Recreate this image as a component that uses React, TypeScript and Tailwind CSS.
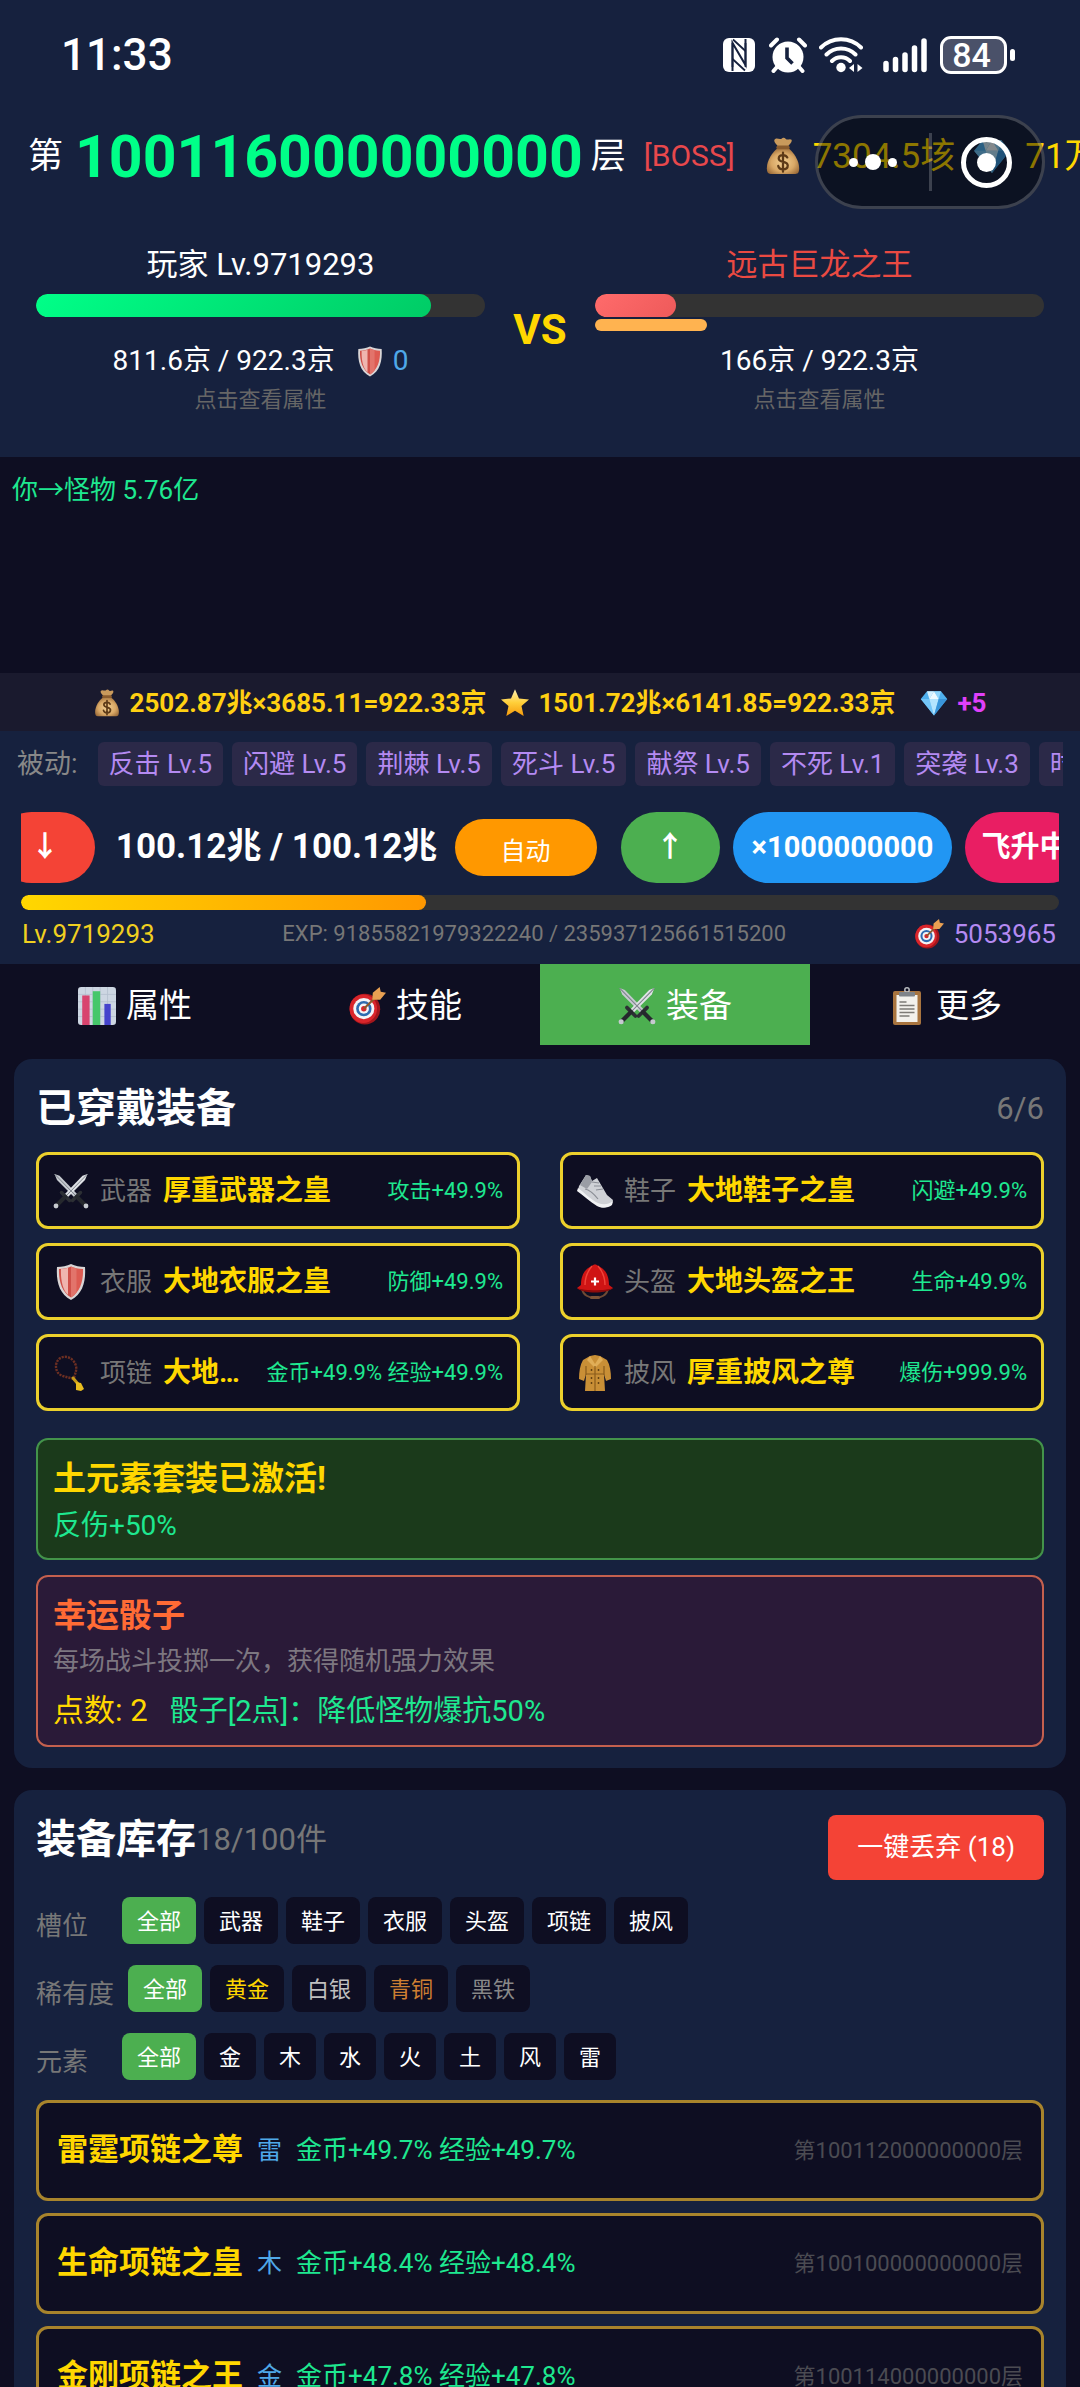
import { useState } from 'react';
import type { ReactNode } from 'react';
import clsx from 'clsx';

type IconProps = { className?: string };

const MoneyBag = ({ className }: IconProps) => (
  <svg viewBox="0 0 36 40" className={className} aria-hidden="true">
    <defs>
      <radialGradient id="bag" cx="0.5" cy="0.55" r="0.6">
        <stop offset="0" stopColor="#f2cf92" />
        <stop offset="0.6" stopColor="#d9a866" />
        <stop offset="1" stopColor="#9a6a38" />
      </radialGradient>
    </defs>
    <path d="M9 3c2-3 5 0 7-1s3-2 5 0 4-1 6 1c1 2-2 5-4 7H13c-2-2-5-5-4-7z" fill="#c99a5c" />
    <path d="M12 12c-5 4-11 12-11 21 0 4 1 6 4 6h26c3 0 4-2 4-6 0-9-6-17-11-21z" fill="url(#bag)" />
    <rect x="11" y="9" width="14" height="4" rx="2" fill="#8a5c2e" />
    <path d="M22.500 21.500c-1-2-2.500-2.500-4.500-2.500-3 0-4.500 1.500-4.500 3.500 0 5 9.500 2.500 9.500 7.500 0 2.500-2 4-5 4-2.500 0-4.500-1-5-3.500M18 16.500v20" fill="none" stroke="#5d3a17" strokeWidth="2.400" strokeLinecap="round" />
  </svg>
);

const Gem = ({ className }: IconProps) => (
  <svg viewBox="0 0 36 36" className={className} aria-hidden="true">
    <path d="M9 3h18l8 10-17 21L1 13z" fill="#4fb0ee" />
    <path d="M9 3l3 10L18 3z" fill="#d5f1ff" />
    <path d="M27 3l-3 10L18 3z" fill="#8fd4fb" />
    <path d="M1 13h11l6 21z" fill="#74c5f7" />
    <path d="M12 13h12l-6 21z" fill="#b4e4fe" />
    <path d="M24 13h11L18 34z" fill="#3a95da" />
    <path d="M18 3l-6 10h12z" fill="#eefaff" />
  </svg>
);

const Star = ({ className }: IconProps) => (
  <svg viewBox="0 0 36 36" className={className} aria-hidden="true">
    <defs>
      <linearGradient id="star" x1="0" y1="0" x2="0" y2="1">
        <stop offset="0" stopColor="#fff0b0" />
        <stop offset="0.5" stopColor="#ffcf3a" />
        <stop offset="1" stopColor="#f59a0c" />
      </linearGradient>
    </defs>
    <path d="M18 1.500l4.800 11 12 1.200-9 8 2.600 11.800L18 27.300 7.600 33.500l2.600-11.800-9-8 12-1.200z" fill="url(#star)" />
  </svg>
);

const Shield = ({ className }: IconProps) => (
  <svg viewBox="0 0 36 36" className={className} aria-hidden="true">
    <path d="M4 3c5 0 10-1 14-3 4 2 9 3 14 3 1 14-2 27-14 33C6 30 3 17 4 3z" fill="#d9d5d6" />
    <path d="M6 5c5 0 9-1 12-2.500v31C9 28 5.500 17 6 5z" fill="#cf5049" />
    <path d="M30 5c-5 0-9-1-12-2.500v31C27 28 30.500 17 30 5z" fill="#dd5b52" />
    <path d="M8 5c2.500 0 5-.5 7-1.200v27C9.500 26 7.500 15 8 5z" fill="#efb5af" />
    <path d="M18 2.500c2 .8 3.500 1.500 5.500 1.900v24c-1.500 2-3.500 4-5.500 5.100z" fill="#e2746b" />
  </svg>
);

const Target = ({ className }: IconProps) => (
  <svg viewBox="0 0 36 36" className={className} aria-hidden="true">
    <ellipse cx="16" cy="21" rx="14.500" ry="14.500" fill="#a3161c" />
    <ellipse cx="14.500" cy="20.500" rx="13" ry="13.500" fill="#d9252b" />
    <circle cx="15" cy="20.500" r="10" fill="#f4f4f6" />
    <circle cx="15" cy="20.500" r="7.300" fill="#2f6bb0" />
    <circle cx="15" cy="20.500" r="4.800" fill="#f4f4f6" />
    <circle cx="15" cy="20.500" r="2.600" fill="#d9252b" />
    <path d="M15 20.500L29 7" stroke="#8c5a2b" strokeWidth="2" />
    <path d="M23 12l.5-6.500L30 0l1 4.500 5 1-5.500 6.500z" fill="#e8a052" />
  </svg>
);

const Swords = ({ className }: IconProps) => (
  <svg viewBox="0 0 36 36" className={className} aria-hidden="true">
    <path d="M1.500 1l5 1.800L26 23l-3 3L4 7z" fill="#c6cad0" />
    <path d="M34.500 1l-5 1.800L10 23l3 3L32 7z" fill="#dfe2e6" />
    <path d="M1.500 1L24.500 24.500M34.500 1L11.500 24.500" stroke="#7d838b" strokeWidth="1" />
    <path d="M19.500 27.500l8-8M16.500 27.500l-8-8" stroke="#2c2f34" strokeWidth="3.500" strokeLinecap="round" />
    <path d="M24 24l8 8M12 24l-8 8" stroke="#25282d" strokeWidth="4" strokeLinecap="round" />
    <circle cx="33" cy="33" r="2.400" fill="#c6cad0" />
    <circle cx="3" cy="33" r="2.400" fill="#c6cad0" />
  </svg>
);

const Chart = ({ className }: IconProps) => (
  <svg viewBox="0 0 36 36" className={className} aria-hidden="true">
    <rect width="36" height="36" rx="3" fill="#cdd6e2" />
    <path d="M0 7h36M0 14h36M0 21h36M0 28h36M7 0v36M14 0v36M21 0v36M28 0v36" stroke="#b4bfce" strokeWidth="0.800" />
    <rect x="4" y="8" width="7" height="28" fill="#d8436e" />
    <rect x="14" y="4" width="7" height="32" fill="#45c76a" />
    <rect x="25" y="16" width="6" height="20" fill="#4543cc" />
  </svg>
);

const Clipboard = ({ className }: IconProps) => (
  <svg viewBox="0 0 36 38" className={className} aria-hidden="true">
    <rect x="4" y="4" width="28" height="34" rx="2" fill="#a8743f" />
    <rect x="7.500" y="8" width="21" height="27" fill="#f3f1ec" />
    <circle cx="18" cy="3" r="2.200" fill="none" stroke="#b9bcc0" strokeWidth="1.500" />
    <rect x="10" y="5" width="16" height="4.500" rx="1" fill="#7f8388" />
    <path d="M10.500 15h7M10.500 18.500h15M10.500 22h15M10.500 25.500h15M10.500 29h10" stroke="#7e7b76" strokeWidth="1.600" />
  </svg>
);

const Shoe = ({ className }: IconProps) => (
  <svg viewBox="0 0 36 36" className={className} aria-hidden="true">
    <path d="M2 13l7-11 4 1 2 5 5-3 10 17 6 5-1 4c-4 4-10 4-14 1L1 17z" fill="#cfd1d6" />
    <path d="M9 2l4 1 2 6-5 7-7-4z" fill="#9a9da5" />
    <path d="M1 15c7 5 13 12 20 15 5 2 10 2 15-2l-1 4c-4 3-10 4-15 1C13 29 6 22 0 18z" fill="#f1f2f4" />
    <path d="M15 9l7 1M17 13l7 0M19 17l7-1M8 16c5 1 9 5 13 10" stroke="#8a8d95" strokeWidth="1.200" fill="none" />
  </svg>
);

const Helmet = ({ className }: IconProps) => (
  <svg viewBox="0 0 36 36" className={className} aria-hidden="true">
    <path d="M5 25c2 12 24 12 26 0" fill="none" stroke="#6f4a34" strokeWidth="1.800" />
    <rect x="13" y="32" width="10" height="3" rx="1.500" fill="#7c5338" />
    <path d="M4 21C4 10 9 4 15 2c1-2 5-2 6 0 6 2 11 8 11 19l4 3c-6 5-30 5-36 0z" fill="#cf1414" />
    <path d="M15 2c-5 6-7 12-7 19M21 2c5 6 7 12 7 19" stroke="#f0443a" strokeWidth="1.400" fill="none" />
    <path d="M0 24c8 3 28 3 36 0-6 6-30 6-36 0z" fill="#8e0c0c" />
    <path d="M18 13.500v8M14 17.500h8" stroke="#fff" strokeWidth="2.200" />
  </svg>
);

const Beads = ({ className }: IconProps) => (
  <svg viewBox="0 0 36 36" className={className} aria-hidden="true">
    <path d="M21 23c1-5 3-7 2-12C21 3 12-1 6 4c-5 5-3 12 0 15 4 3 9 3 15 5" fill="none" stroke="#6d2f22" strokeWidth="2.400" strokeDasharray="2.200 1" />
    <path d="M20 23l5 6" stroke="#c79a1a" strokeWidth="3" strokeLinecap="round" />
    <path d="M23 27l5 1 3 6-3 2-5-1z" fill="#e9bd1f" />
  </svg>
);

const Coat = ({ className }: IconProps) => (
  <svg viewBox="0 0 36 36" className={className} aria-hidden="true">
    <path d="M13 1l5-1 5 1 7 4c3 5 4 12 4 19l-5 2-2-7 1 17H8l1-17-2 7-5-2C2 17 3 10 6 5z" fill="#c98f36" />
    <path d="M13 1l5 8 5-8 3 4-8 8-8-8z" fill="#e0ae58" />
    <path d="M18 11v25M9 19h18M9 11v9M27 11v9" stroke="#8a5c1c" strokeWidth="1.200" />
    <path d="M14.500 15v.1M21.500 15v.1M14.500 23v.1M21.500 23v.1M14.500 28v.1M21.500 28v.1" stroke="#5d3c10" strokeWidth="1.800" strokeLinecap="round" />
  </svg>
);

function StatusBar() {
  return (
    <div className="flex h-[110px] items-center justify-between pl-[61px] pr-[65px]">
      <span className="text-[44px] font-medium leading-none text-white">11:33</span>
      <div className="flex items-center">
        <svg viewBox="0 0 32 34" className="h-[34px] w-8" aria-hidden="true">
          <rect width="32" height="34" rx="6" fill="#fff" />
          <path d="M9.500 33V5l13 22V1" fill="none" stroke="#16213e" strokeWidth="2" />
          <path d="M9.500 5v24M22.500 29V5" fill="none" stroke="#16213e" strokeWidth="1.800" />
          <path d="M10 1.500L22.500 13M9.500 21L22 32.500" fill="none" stroke="#16213e" strokeWidth="1.800" />
        </svg>
        <svg viewBox="0 0 38 36" className="ml-3.5 h-9 w-[38px]" aria-hidden="true">
          <circle cx="19" cy="20" r="15.500" fill="#fff" />
          <path d="M2 8.500l6-6M36 8.500l-6-6M8 30l-3.500 4M30 30l3.500 4" stroke="#fff" strokeWidth="4" strokeLinecap="round" />
          <path d="M18 10.500V21l5.500 5.500" fill="none" stroke="#16213e" strokeWidth="3.600" />
        </svg>
        <svg viewBox="0 0 44 36" className="ml-3 h-9 w-11" aria-hidden="true">
          <path d="M2 10.500c11-11 29-11 40 0M7.500 17.500c8-8 21-8 29 0M13 24c5-5 13-5 18 0" fill="none" stroke="#fff" strokeWidth="4" strokeLinecap="round" />
          <circle cx="22" cy="30.500" r="4.700" fill="#fff" />
          <path d="M30 31l5-4v8zM43.500 31l-5-4v8z" fill="#fff" />
        </svg>
        <svg viewBox="0 0 44 36" className="ml-5 h-9 w-11" aria-hidden="true">
          <path d="M3 26.500v6M12.500 22.500v10M22 18v14.500M31.500 11v21.500M41 4v28.500" stroke="#fff" strokeWidth="5.500" strokeLinecap="round" />
        </svg>
        <div className="ml-[13px] flex items-center gap-[3px]">
          <div className="flex h-[38px] w-[67px] items-center justify-center rounded-[11px] border-[3px] border-white bg-[#4a5169] pr-1 text-[34px] font-medium leading-none text-white">
            84
          </div>
          <div className="h-3 w-[5px] rounded-full bg-white" />
        </div>
      </div>
    </div>
  );
}

function FloorHeader() {
  return (
    <div className="relative flex h-[92px] items-center whitespace-nowrap pl-7 leading-none">
      <span className="text-[35px] text-white">第</span>
      <span className="ml-3 text-[59px] font-bold text-[#00ff88]">100116000000000</span>
      <span className="ml-2 text-[35px] text-white">层</span>
      <span className="ml-[18px] text-[30px] text-[#e8484c]">[BOSS]</span>
      <MoneyBag className="ml-[30px] h-[38px] w-9 shrink-0" />
      <span className="ml-3 text-[35px] text-[#ffd700]">7304.5垓</span>
      <Gem className="ml-[18px] h-[38px] w-[38px] shrink-0" />
      <span className="ml-3.5 text-[35px] text-[#ffd700]">71万</span>

      {/* mini program capsule floats over the counters */}
      <div className="absolute right-[35px] top-[5px] flex h-[94px] w-[230px] items-center rounded-full border-[3px] border-white/20 bg-black/45">
        <button type="button" aria-label="更多" className="flex h-full flex-1 items-center justify-center gap-[7px]">
          <span className="h-[9px] w-[9px] rounded-full bg-white" />
          <span className="h-4 w-4 rounded-full bg-white" />
          <span className="h-[9px] w-[9px] rounded-full bg-white" />
        </button>
        <span className="h-[58px] w-[3px] bg-white/20" />
        <button type="button" aria-label="关闭" className="flex h-full flex-1 items-center justify-center">
          <span className="flex h-[51px] w-[51px] items-center justify-center rounded-full border-[5px] border-white">
            <span className="h-[19px] w-[19px] rounded-full bg-white" />
          </span>
        </button>
      </div>
    </div>
  );
}

type FighterProps = {
  name: string;
  nameClass: string;
  hp: number;
  fillClass: string;
  shield: number;
  children: ReactNode;
};

function Fighter({ name, nameClass, hp, fillClass, shield, children }: FighterProps) {
  return (
    <button type="button" className="flex-1 text-center">
      <div className={clsx('text-[31px] leading-[42px]', nameClass)}>{name}</div>
      <div className="mt-2 h-[23px] overflow-hidden rounded-full bg-[#333]">
        <div className={clsx('h-full rounded-full bg-linear-135', fillClass)} style={{ width: `${hp}%` }} />
      </div>
      <div className="mt-0.5 h-3">
        <div className="h-full rounded-full bg-[#ffb350]" style={{ width: `${shield}%` }} />
      </div>
      <div className="mt-[11px] flex items-center justify-center text-[28px] leading-[38px] text-white">{children}</div>
      <div className="mt-1 text-[22px] leading-[31px] text-[#666]">点击查看属性</div>
    </button>
  );
}

const PASSIVES = [
  '反击 Lv.5',
  '闪避 Lv.5',
  '荆棘 Lv.5',
  '死斗 Lv.5',
  '献祭 Lv.5',
  '不死 Lv.1',
  '突袭 Lv.3',
  '时停 Lv.1',
];

const TABS = [
  { id: 'stats', label: '属性', Icon: Chart },
  { id: 'skills', label: '技能', Icon: Target },
  { id: 'gear', label: '装备', Icon: Swords },
  { id: 'more', label: '更多', Icon: Clipboard },
];

const EQUIPPED = [
  { slot: '武器', name: '厚重武器之皇', stat: '攻击+49.9%', Icon: Swords },
  { slot: '鞋子', name: '大地鞋子之皇', stat: '闪避+49.9%', Icon: Shoe },
  { slot: '衣服', name: '大地衣服之皇', stat: '防御+49.9%', Icon: Shield },
  { slot: '头盔', name: '大地头盔之王', stat: '生命+49.9%', Icon: Helmet },
  { slot: '项链', name: '大地项链之皇', stat: '金币+49.9% 经验+49.9%', Icon: Beads },
  { slot: '披风', name: '厚重披风之尊', stat: '爆伤+999.9%', Icon: Coat },
];

const FILTERS = [
  { label: '槽位', options: ['全部', '武器', '鞋子', '衣服', '头盔', '项链', '披风'] },
  { label: '稀有度', options: ['全部', '黄金', '白银', '青铜', '黑铁'] },
  { label: '元素', options: ['全部', '金', '木', '水', '火', '土', '风', '雷'] },
];

const RARITY_COLORS: Record<string, string> = {
  黄金: 'text-[#ffd700]',
  白银: 'text-[#c0c0c0]',
  青铜: 'text-[#cd7f32]',
  黑铁: 'text-[#888]',
};

const INVENTORY = [
  { name: '雷霆项链之尊', element: '雷', stat: '金币+49.7% 经验+49.7%', floor: '第100112000000000层' },
  { name: '生命项链之皇', element: '木', stat: '金币+48.4% 经验+48.4%', floor: '第100100000000000层' },
  { name: '金刚项链之王', element: '金', stat: '金币+47.8% 经验+47.8%', floor: '第100114000000000层' },
];

function FilterRow({ label, options }: { label: string; options: string[] }) {
  const [selected, setSelected] = useState(options[0]);

  return (
    <div className="flex items-center">
      <span className="mr-3.5 min-w-[72px] pt-2.5 text-[26px] leading-8 text-[#777]">{label}</span>
      <div className="flex gap-2">
        {options.map((option) => (
          <button
            key={option}
            type="button"
            aria-pressed={selected === option}
            onClick={() => setSelected(option)}
            className={clsx(
              'h-[47px] rounded-lg px-[15px] pt-0.5 text-[22px] leading-none',
              selected === option ? 'bg-[#4caf50]' : 'bg-[#0e0e22]',
              RARITY_COLORS[option] ?? 'text-white',
            )}
          >
            {option}
          </button>
        ))}
      </div>
    </div>
  );
}

export default function App() {
  const [activeTab, setActiveTab] = useState('gear');

  return (
    <div className="h-screen overflow-hidden bg-[#0e0e22] font-[Roboto,'Noto_Sans_CJK_SC',sans-serif]">
      <header className="bg-[#16213e]">
        <StatusBar />
        <FloorHeader />
        <section className="flex items-center px-9 pb-[42px] pt-[42px]">
          <Fighter name="玩家 Lv.9719293" nameClass="text-white" hp={88} fillClass="from-[#00ff88] to-[#00cc66]" shield={0}>
            <span>811.6京 / 922.3京</span>
            <Shield className="ml-5 h-[31px] w-[30px]" />
            <span className="ml-2 text-[28px] text-[#4fa8e8]">0</span>
          </Fighter>
          <span className="w-[110px] text-center text-[42px] font-bold leading-none text-[#ffd700]">VS</span>
          <Fighter name="远古巨龙之王" nameClass="text-[#ea4a42]" hp={18} fillClass="from-[#ff6b6b] to-[#ee5a5a]" shield={25}>
            <span>166京 / 922.3京</span>
          </Fighter>
        </section>
      </header>

      <section className="h-[216px] px-3 pt-[15px] text-[26px] leading-9 text-[#1ee890]">你→怪物 5.76亿</section>

      <section className="flex h-[58px] items-center justify-center bg-[#1a1a2e] pt-0.5 text-[26px] font-bold leading-none text-[#ffd012]">
        <MoneyBag className="h-7 w-[26px]" />
        <span className="ml-2.5">2502.87兆×3685.11=922.33京</span>
        <Star className="ml-3.5 h-[30px] w-[30px]" />
        <span className="ml-2">1501.72兆×6141.85=922.33京</span>
        <Gem className="ml-6 h-7 w-[30px]" />
        <span className="ml-2 text-[#e040fb]">+5</span>
      </section>

      <section className="bg-[#16213e] pb-3.5 pt-[11px]">
        <div className="mx-[17px] flex items-center overflow-hidden whitespace-nowrap">
          <span className="mr-5 text-[27px] leading-none text-[#888]">被动:</span>
          <div className="flex gap-[9px]">
            {PASSIVES.map((skill) => (
              <span key={skill} className="h-11 shrink-0 rounded-md bg-[#2b2948] px-[11px] text-[26px] leading-[44px] text-[#b48af2]">
                {skill}
              </span>
            ))}
          </div>
        </div>

        <div className="mx-[21px] mt-[26px] flex h-[71px] items-center justify-center gap-[13px] overflow-hidden whitespace-nowrap text-[29px] font-bold text-white *:shrink-0">
          <button type="button" aria-label="下一层" className="h-full w-[99px] rounded-full bg-[#f44336]">↓</button>
          <span className="w-[334px] pl-1 text-center text-[35px]">100.12兆 / 100.12兆</span>
          <button type="button" className="mr-[11px] h-[57px] w-[142px] rounded-full bg-[#ff9800] pt-2 text-[25px] font-normal leading-none">
            自动
          </button>
          <button type="button" aria-label="上一层" className="h-full w-[99px] rounded-full bg-[#4caf50]">↑</button>
          <button type="button" className="h-full rounded-full bg-[#2196f3] px-[19px]">×1000000000</button>
          <button type="button" className="h-full rounded-full bg-[#e91e63] px-4">飞升中</button>
        </div>

        <div className="mx-[21px] mt-3 h-[15px] overflow-hidden rounded-full bg-[#333]">
          <div className="h-full rounded-full bg-linear-to-r from-[#ffd700] to-[#ff9800]" style={{ width: '39%' }} />
        </div>
        <div className="ml-[22px] mr-6 mt-2 flex items-center justify-between text-[26px] leading-8">
          <span className="text-[#f0d020]">Lv.9719293</span>
          <span className="text-[22px] text-[#777]">EXP: 91855821979322240 / 235937125661515200</span>
          <span className="flex items-center gap-2.5 text-[#b48af2]">
            <Target className="h-[30px] w-[30px]" />
            5053965
          </span>
        </div>
      </section>

      <nav className="grid grid-cols-4">
        {TABS.map(({ id, label, Icon }) => (
          <button
            key={id}
            type="button"
            onClick={() => setActiveTab(id)}
            className={clsx(
              'flex h-[81px] items-center justify-center gap-2.5 pt-0.5 text-[33px] leading-none text-white',
              activeTab === id && 'bg-[#4caf50]',
            )}
          >
            <Icon className="h-[38px] w-[38px]" />
            <span>{label}</span>
          </button>
        ))}
      </nav>

      <main className="flex flex-col gap-[22px] px-3.5 pt-3.5">
        <section className="rounded-[18px] bg-[#16213e] px-[22px] pb-[21px] pt-[23px]">
          <div className="flex items-center justify-between">
            <h2 className="text-[40px] font-bold leading-[54px] text-white">已穿戴装备</h2>
            <span className="text-[31px] text-[#777]">6/6</span>
          </div>

          <div className="mt-4 grid grid-cols-2 gap-x-10 gap-y-3.5">
            {EQUIPPED.map(({ slot, name, stat, Icon }) => (
              <button
                key={slot}
                type="button"
                className="flex h-[77px] items-center whitespace-nowrap rounded-xl border-[3px] border-[#ecd02c] bg-[#0e0e22] px-3.5 text-left leading-9"
              >
                <Icon className="h-9 w-9 shrink-0" />
                <span className="ml-[11px] text-[26px] text-[#777]">{slot}</span>
                <span className="ml-[11px] min-w-0 flex-1 truncate text-[28px] font-bold text-[#ffd700]">{name}</span>
                <span className="ml-2.5 text-[22px] text-[#1ee890]">{stat}</span>
              </button>
            ))}
          </div>

          <div className="mt-[27px] rounded-xl border-2 border-[#43934a] bg-[#1b3a1b] px-[15px] pb-3 pt-4">
            <h3 className="text-[33px] font-bold leading-[46px] text-[#ffd700]">土元素套装已激活!</h3>
            <p className="mt-1 text-[28px] leading-10 text-[#1ee890]">反伤+50%</p>
          </div>

          <div className="mt-[15px] rounded-xl border-2 border-[#c4604e] bg-[#2a1a38] px-[15px] pb-3 pt-4">
            <h3 className="text-[33px] font-bold leading-[46px] text-[#ff6b35]">幸运骰子</h3>
            <p className="mt-0.5 text-[26px] leading-10 text-[#7d7780]">每场战斗投掷一次，获得随机强力效果</p>
            <p className="mt-2 flex gap-[22px] text-[31px] leading-[44px] text-[#ffd700]">
              点数: 2<span className="text-[29px] text-[#1ee890]">骰子[2点]：降低怪物爆抗50%</span>
            </p>
          </div>
        </section>

        <section className="rounded-[18px] bg-[#16213e] px-[22px] pb-[21px] pt-[25px]">
          <div className="flex items-start">
            <h2 className="text-[40px] font-bold leading-[50px] text-white">装备库存</h2>
            <span className="text-[31px] leading-[50px] text-[#777]">18/100件</span>
            <button type="button" className="ml-auto h-[65px] rounded-lg bg-[#f44336] px-[29px] text-[26px] text-white">
              一键丢弃 (18)
            </button>
          </div>

          <div className="mt-[17px] flex flex-col gap-[21px]">
            {FILTERS.map((filter) => (
              <FilterRow key={filter.label} {...filter} />
            ))}
          </div>

          <ul className="mt-5 flex flex-col gap-3">
            {INVENTORY.map((item) => (
              <li
                key={item.name}
                className="flex h-[101px] items-center whitespace-nowrap rounded-xl border-[3px] border-[#a8842c] bg-[#0e0e22] px-[18px]"
              >
                <span className="text-[31px] font-bold text-[#ffd700]">{item.name}</span>
                <span className="ml-3.5 text-[25px] text-[#4fa8e8]">{item.element}</span>
                <span className="ml-3.5 text-[26px] text-[#1ee890]">{item.stat}</span>
                <span className="ml-auto text-[22px] text-[#4b4b52]">{item.floor}</span>
              </li>
            ))}
          </ul>
        </section>
      </main>
    </div>
  );
}
